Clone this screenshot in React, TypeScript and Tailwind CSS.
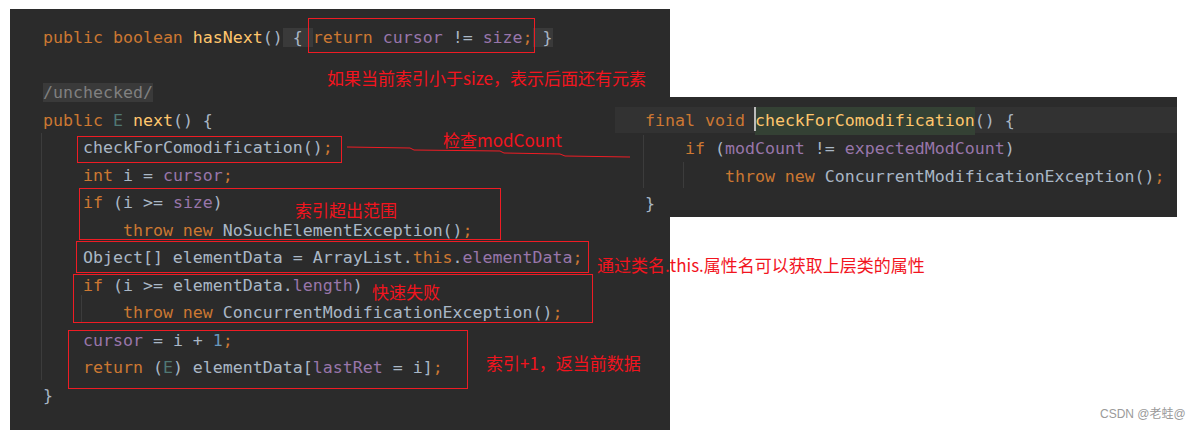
import React from "react";

type Tok = [string, string?];

const C = {
  kw: "text-[#cc7832]",
  fn: "text-[#ffc66d]",
  fd: "text-[#9876aa]",
  tx: "text-[#a9b7c6]",
  num: "text-[#6897bb]",
  tp: "text-[#507874]",
  cm: "text-[#808080]",
};

const leftLines: Tok[][] = [
  [
    ["public boolean ", C.kw],
    ["hasNext", C.fn],
    ["()", C.tx],
    [" { ", `${C.tx} bg-[#3a3a3a]`],
    ["return", C.kw],
    [" cursor", C.fd],
    [" != ", C.tx],
    ["size", C.fd],
    [";", C.kw],
    [" }", `${C.tx} bg-[#3a3a3a]`],
  ],
  [],
  [["/unchecked/", `${C.cm} bg-[#3a3a3a]`]],
  [
    ["public", C.kw],
    [" E", C.tp],
    [" next", C.fn],
    ["() {", C.tx],
  ],
  [["    checkForComodification()", C.tx], [";", C.kw]],
  [["    int", C.kw], [" i = ", C.tx], ["cursor", C.fd], [";", C.kw]],
  [["    if", C.kw], [" (i >= ", C.tx], ["size", C.fd], [")", C.tx]],
  [["        throw new", C.kw], [" NoSuchElementException()", C.tx], [";", C.kw]],
  [
    ["    Object[] elementData = ArrayList.", C.tx],
    ["this", C.kw],
    [".", C.tx],
    ["elementData", C.fd],
    [";", C.kw],
  ],
  [["    if", C.kw], [" (i >= elementData.", C.tx], ["length", C.fd], [")", C.tx]],
  [["        throw new", C.kw], [" ConcurrentModificationException()", C.tx], [";", C.kw]],
  [["    cursor", C.fd], [" = i + ", C.tx], ["1", C.num], [";", C.kw]],
  [
    ["    return", C.kw],
    [" (", C.tx],
    ["E", C.tp],
    [") elementData[", C.tx],
    ["lastRet", C.fd],
    [" = i]", C.tx],
    [";", C.kw],
  ],
  [["}", C.tx]],
];

function CodeLine({ toks }: { toks: Tok[] }) {
  return (
    <div className="h-[27.5px] whitespace-pre">
      {toks.length === 0 ? " " : toks.map((t, i) => (
        <span key={i} className={t[1]}>
          {t[0]}
        </span>
      ))}
    </div>
  );
}

const boxes = [
  "left-[308px] top-[18px] w-[227px] h-[35px]",
  "left-[77px] top-[136px] w-[265px] h-[27px]",
  "left-[79px] top-[188px] w-[422px] h-[52px]",
  "left-[76px] top-[241px] w-[513px] h-[32px]",
  "left-[73px] top-[274px] w-[520px] h-[49px]",
  "left-[68px] top-[330px] w-[400px] h-[59px]",
];

const notes: [string, string][] = [
  ["如果当前索引小于size，表示后面还有元素", "left-[327px] top-[69px]"],
  ["检查modCount", "left-[443px] top-[131px]"],
  ["索引超出范围", "left-[295px] top-[201px]"],
  ["通过类名.this.属性名可以获取上层类的属性", "left-[597px] top-[256px]"],
  ["快速失败", "left-[372px] top-[283px]"],
  ["索引+1，返当前数据", "left-[486px] top-[354px]"],
];

export default function App() {
  return (
    <div className="relative h-[430px] w-[1199px] overflow-hidden bg-white">
      {/* main editor shot */}
      <div className="relative ml-[10px] mt-[9px] h-[421px] w-[660px] bg-[#2b2b2b] pl-[33px] pt-[15px] font-['DejaVu_Sans_Mono',monospace] text-[16.6px] leading-[27.5px]">
        {leftLines.map((l, i) => (
          <CodeLine key={i} toks={l} />
        ))}
        <div className="absolute left-[31px] top-[124px] h-[247px] w-px bg-[#3c3c3c]" />
        <div className="absolute left-[71px] top-[286px] h-[28px] w-px bg-[#3c3c3c]" />
      </div>

      {/* checkForComodification shot */}
      <div className="absolute left-[615px] top-[97px] h-[120px] w-[562px] bg-[#2b2b2b] pt-[10px] font-['DejaVu_Sans_Mono',monospace] text-[16.6px] leading-[28px]">
        <div className="flex h-[26px] items-center whitespace-pre bg-[#323232] pl-[30px] pt-[2px]">
          <span className={C.kw}>final void </span>
          <span className="relative bg-[#344134]">
            <span className="absolute -left-px top-0 h-[24px] w-[2px] bg-[#bbbbbb]" />
            <span className={C.fn}>checkForComodification</span>
          </span>
          <span className={C.tx}>() {"{"}</span>
        </div>
        <div className="h-[28px] whitespace-pre pl-[30px] pt-[2px]">
          <span className={C.kw}>    if</span>
          <span className={C.tx}> (</span>
          <span className={C.fd}>modCount</span>
          <span className={C.tx}> != </span>
          <span className={C.fd}>expectedModCount</span>
          <span className={C.tx}>)</span>
        </div>
        <div className="h-[28px] whitespace-pre pl-[30px] pt-[2px]">
          <span className={C.kw}>        throw new</span>
          <span className={C.tx}> ConcurrentModificationException()</span>
          <span className={C.kw}>;</span>
        </div>
        <div className="whitespace-pre pl-[30px] pt-[1px]">
          <span className={C.tx}>{"}"}</span>
        </div>
        <div className="absolute left-[28px] top-[38px] h-[53px] w-px bg-[#3c3c3c]" />
        <div className="absolute left-[68px] top-[65px] h-[26px] w-px bg-[#3c3c3c]" />
      </div>

      {/* annotations */}
      {boxes.map((b, i) => (
        <div key={i} className={`absolute border border-[#ee1c24] ${b}`} />
      ))}
      {notes.map(([t, pos], i) => (
        <div
          key={i}
          className={`absolute whitespace-nowrap font-['Noto_Sans_CJK_SC',sans-serif] text-[17px] leading-[17px] text-[#f2141e] ${pos}`}
        >
          {t}
        </div>
      ))}
      <svg className="absolute left-0 top-0" width="1199" height="430">
        <polyline
          points="347,147 410,148 414,150 500,151 504,153 560,154 565,156 630,157"
          fill="none"
          stroke="#ee1c24"
          strokeWidth="1"
        />
      </svg>

      <div className="absolute left-[1100px] top-[406px] whitespace-nowrap font-['Liberation_Sans','Noto_Sans_CJK_SC',sans-serif] text-[12px] leading-[16px] text-[#9a9a9a]">
        CSDN @老蛙@
      </div>
    </div>
  );
}
